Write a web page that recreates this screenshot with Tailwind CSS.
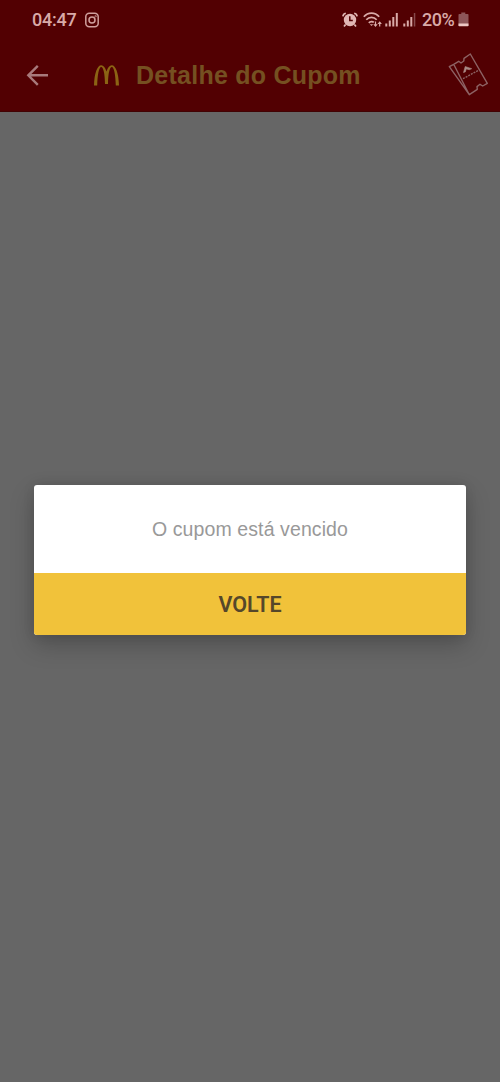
<!DOCTYPE html>
<html lang="pt-BR">
<head>
<meta charset="utf-8">
<title>Detalhe do Cupom</title>
<script src="https://cdn.jsdelivr.net/npm/@tailwindcss/browser@4"></script>
</head>
<body class="flex h-[1082px] w-[500px] flex-col overflow-hidden bg-[#666666]">
<header class="h-[112px] shrink-0 border-b border-[#420304] bg-[#520002]">
  <!-- Status bar -->
  <div class="flex h-[39px] items-center pl-[32px] font-['Roboto',sans-serif] text-[18px] font-medium text-[#d9aaa8]">
    <span class="w-[44px] whitespace-nowrap tracking-[-0.25px]">04:47</span>
    <svg class="ml-[8px] h-4 w-4" viewBox="0 0 16 16" fill="none" stroke="#cf9f9d" stroke-width="1.5"><rect x="1.8" y="1.3" width="12.4" height="13.4" rx="3.5"/><circle cx="8" cy="8" r="3"/><circle cx="11.6" cy="4.2" r=".3"/></svg>
    <svg class="ml-[242px] h-[16px] w-[16px]" viewBox="0 0 16 16"><g stroke="#e0b6b4" fill="none" stroke-width="1.7"><path d="M.9 4.300Q1.200 2 3.800 1.300M15.100 4.300Q14.800 2 12.200 1.300M3.600 12.500 2 14.600M12.400 12.500 14 14.600"/></g><circle cx="8" cy="8" r="6.200" fill="#e0b6b4"/><path d="M7.800 4.300V8.400h3" stroke="#520002" stroke-width="1.500" fill="none"/></svg>
    <svg class="ml-[5px] h-[16px] w-[19px]" viewBox="0 0 19 16" fill="none" stroke="#d9aaa8" stroke-width="1.700"><path d="M.8 4.800C5-.1 12-.1 16.200 4.800M3.300 7.800C6.200 4.500 10.800 4.500 13.700 7.800M5.800 10.800C7.300 9.200 9.700 9.200 10.800 10.400"/><path stroke="none" fill="#d9aaa8" d="m6.800 12.200h3.400L8.500 14z"/><path stroke-width="1.200" d="M12.500 9.500v4"/><path stroke-width="1.200" d="M16.700 14.500v-4"/><path stroke="none" fill="#d9aaa8" d="M10.300 12.200h4.400l-2.200 2.800zM14.500 12h4.400l-2.200-2.800z"/></svg>
    <svg class="ml-[3px] h-[15px] w-[14px]" viewBox="0 0 14 15" fill="#d9aaa8"><path d="M.3 11.500h2V14.500h-2zM3.800 8.500h2v6h-2zM7.300 5h2v9.500h-2z"/><path d="M10.800 1h2v13.500h-2z"/></svg>
    <svg class="ml-[4px] h-[15px] w-[14px]" viewBox="0 0 14 15" fill="#d9aaa8"><path d="M.3 11.500h2V14.500h-2zM3.800 8.500h2v6h-2zM7.300 5h2v9.500h-2z"/><path fill="#86494b" d="M10.800 1h1.500v13.500h-1.500z"/></svg>
    <span class="ml-[5px] w-[34px] whitespace-nowrap tracking-[-0.5px]">20%</span>
    <svg class="ml-[2px] h-[15px] w-[11px]" viewBox="0 0 11 15"><path d="M3.300.5h4V2H9.700q.8 0 .8.800V14H.5V2.800Q.5 2 1.300 2h2z" fill="#8d5659"/><path d="M.5 11.500h10V13.500q0 .8-.8.800H1.300q-.8 0-.8-.8z" fill="#ecc7c4"/></svg>
  </div>
  <!-- App bar -->
  <div class="flex h-[72px] items-center pl-[26px]">
    <svg class="h-[22px] w-[23px]" viewBox="0 0 23 22" fill="none" stroke="#a8797b" stroke-width="2.400"><path d="M22 11.300H2.500M11.800 1.800 2.300 11.300l9.500 9.500"/></svg>
    <svg class="ml-[45px] h-[21px] w-[25px]" viewBox="0 0 25 21" fill="#8b6414"><path d="M0 20.500C.3 8 3.300.2 7.200.2c2.300 0 4.200 2.400 5.300 6.200C13.600 2.600 15.500.2 17.800.2c3.900 0 6.900 7.800 7.200 20.300h-3.200C21.600 10 20 2 17.800 2c-2.200 0-3.700 6.700-3.800 17h-3C10.900 8.700 9.400 2 7.200 2 5 2 3.400 10 3.200 20.500z"/></svg>
    <h1 class="ml-[17px] mt-px w-[230px] whitespace-nowrap font-['Liberation_Sans',Arial,sans-serif] text-[25px] font-bold tracking-[0.25px] text-[#755021]">Detalhe do Cupom</h1>
    <svg class="ml-[79px] h-12 w-12" viewBox="0 1 48 48" fill="none" stroke="#8d6264" stroke-width="1.400" stroke-linejoin="round"><path d="M8.700 14.300 13.700 11.300 16 13 18.800 11 19 8.300 25.300 4 42.300 33.300 37.700 36 35 34.300 32 36.600 32.300 39.300 24.300 44.700zM8.700 14.300 4.300 16.700 24.300 44.700"/><path d="m18 28.700 16-8.700" stroke-dasharray="2 1"/><path d="m18.500 22.500 1.700-6 6.500 2.200-2.400 1-3-.8-1 3z" fill="#a98884" stroke="#a98884" stroke-width=".6"/></svg>
  </div>
</header>
<!-- Coupon alert -->
<main class="mx-[34px] mt-[373px] h-[150px] overflow-hidden rounded-[3px] bg-white font-['Liberation_Sans',Arial,sans-serif] shadow-[0_10px_24px_rgba(0,0,0,0.22),0_0_12px_rgba(0,0,0,0.1)]">
  <p class="flex h-[88px] items-center justify-center whitespace-nowrap pt-[2px] text-[19.5px] tracking-[0.1px] text-[#999999]">O cupom está vencido</p>
  <button class="flex h-[62px] w-full items-center justify-center bg-[#f1c23a] pt-[2px] font-['Roboto',sans-serif] text-[21.500px] font-semibold text-[#55472a]">VOLTE</button>
</main>
</body>
</html>
